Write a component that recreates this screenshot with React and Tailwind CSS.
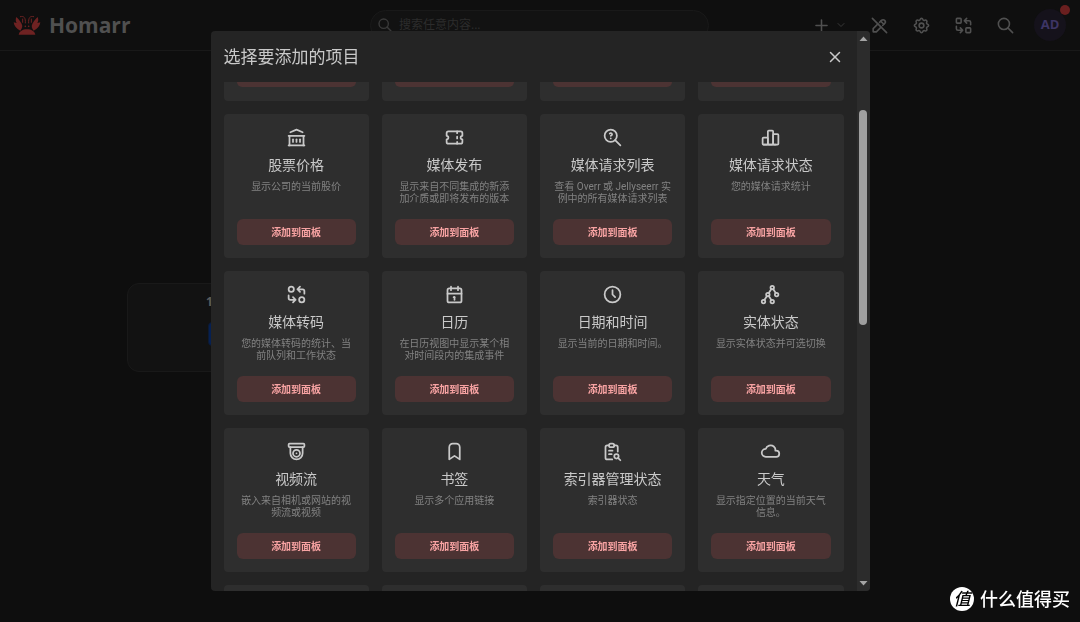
import React from 'react';
import {
  TbBinaryTree,
  TbBookmark,
  TbBuildingBank,
  TbCalendar,
  TbChartBar,
  TbChevronDown,
  TbClock,
  TbCloud,
  TbDeviceCctv,
  TbPencilOff,
  TbPlus,
  TbReplace,
  TbReportSearch,
  TbSearch,
  TbSettings,
  TbTicket,
  TbTransform,
  TbX,
  TbZoomQuestion,
} from 'react-icons/tb';

const items = [
  { icon: TbBuildingBank, title: '股票价格', description: '显示公司的当前股价' },
  { icon: TbTicket, title: '媒体发布', description: '显示来自不同集成的新添加介质或即将发布的版本' },
  { icon: TbZoomQuestion, title: '媒体请求列表', description: '查看 Overr 或 Jellyseerr 实例中的所有媒体请求列表' },
  { icon: TbChartBar, title: '媒体请求状态', description: '您的媒体请求统计' },
  { icon: TbTransform, title: '媒体转码', description: '您的媒体转码的统计、当前队列和工作状态' },
  { icon: TbCalendar, title: '日历', description: '在日历视图中显示某个相对时间段内的集成事件' },
  { icon: TbClock, title: '日期和时间', description: '显示当前的日期和时间。' },
  { icon: TbBinaryTree, title: '实体状态', description: '显示实体状态并可选切换' },
  { icon: TbDeviceCctv, title: '视频流', description: '嵌入来自相机或网站的视频流或视频' },
  { icon: TbBookmark, title: '书签', description: '显示多个应用链接' },
  { icon: TbReportSearch, title: '索引器管理状态', description: '索引器状态' },
  { icon: TbCloud, title: '天气', description: '显示指定位置的当前天气信息。' },
];

const columns = [0, 1, 2, 3];

const Logo = () => (
  <svg viewBox="0 0 84 60" className="h-5 w-7" aria-hidden="true">
    <g fill="#6e2222">
      <path d="M17 59c2-10 12-16 25-16s23 6 25 16z" />
      <path d="M10 6C7 13 8 19 11 24L2 22c1 10 8 19 20 25 6-7 8-14 3-22C21 17 15 11 10 6z" />
      <path d="M74 6c3 7 2 13-1 18l9-2c-1 10-8 19-20 25-6-7-8-14-3-22 4-8 10-14 15-19z" />
      <circle cx="37" cy="34" r="2.5" />
      <circle cx="47" cy="34" r="2.5" />
    </g>
    <g fill="none" stroke="#6e2222" strokeWidth="3" strokeLinecap="round">
      <path d="M37 24C38 9 34 2 22 5" />
      <path d="M47 24C46 9 50 2 62 5" />
      <path d="M29 12v10M55 12v10" />
    </g>
  </svg>
);

const Header = () => (
  <header className="flex h-[51px] items-center border-b border-[#191919] bg-[#0f0f0f] pr-3.5 pl-[13px]">
    <a href="#" className="flex flex-1 items-center gap-2">
      <Logo />
      <span className="text-[21px] leading-7 font-bold text-[#505050]">Homarr</span>
    </a>
    <label className="flex h-[31px] w-[339px] items-center gap-1.5 rounded-full border border-[#191919] bg-[#121212] px-1.5 text-[#3a3a3a]">
      <TbSearch className="size-4" />
      <input
        type="text"
        placeholder="搜索任意内容..."
        aria-label="搜索任意内容..."
        className="min-w-0 flex-1 bg-transparent text-xs outline-none placeholder:text-[#2c2c2c]"
      />
    </label>
    <div className="flex flex-1 items-center justify-end gap-[23px] text-[#505050]">
      <button type="button" aria-label="添加" className="flex items-center gap-1">
        <TbPlus className="size-[19px]" />
        <TbChevronDown className="size-3 text-[#383838]" />
      </button>
      <button type="button" aria-label="编辑"><TbPencilOff className="size-[19px]" /></button>
      <button type="button" aria-label="设置"><TbSettings className="size-[19px]" /></button>
      <button type="button" aria-label="切换"><TbReplace className="size-[19px]" /></button>
      <button type="button" aria-label="搜索"><TbSearch className="size-[19px]" /></button>
      <button
        type="button"
        className="relative -ml-1 flex size-8 items-center justify-center rounded-full bg-[#15121b] text-[13px] font-bold text-[#3d3565]"
      >
        AD
        <span className="absolute -top-1 -right-1 size-2.5 rounded-full bg-[#6a1f1f]" />
      </button>
    </div>
  </header>
);

const ItemCard = ({ icon: Icon, title, description }) => (
  <div className="flex flex-col items-center rounded bg-[#2e2e2e] p-[13px] text-center">
    <Icon className="size-[21px] text-[#c9c9c9]" />
    <h3 className="mt-[7px] text-sm leading-5 text-[#c9c9c9]">{title}</h3>
    <p className="mt-1.5 min-h-[25px] font-[Roboto,'Noto_Sans_CJK_SC',sans-serif] text-[10px] leading-3 text-[#828282]">
      {description}
    </p>
    <button
      type="button"
      className="mt-[13px] h-[26px] w-full rounded-md bg-[#4c3333] text-[10px] font-bold text-[#f8a3a3]"
    >
      添加到面板
    </button>
  </div>
);

const ScrollTrack = () => (
  <div className="flex w-[13px] shrink-0 flex-col items-center bg-[#2c2c2c]">
    <svg viewBox="0 0 13 15" className="h-[15px] w-[13px]" aria-hidden="true">
      <path d="M2.5 10L6.5 5.5L10.5 10z" fill="#a5a5a5" />
    </svg>
    <div className="flex-[64]" />
    <div className="w-2 flex-[214] rounded-full bg-[#9f9f9f]" />
    <div className="flex-[251]" />
    <svg viewBox="0 0 13 15" className="h-[15px] w-[13px]" aria-hidden="true">
      <path d="M2.5 5L6.5 9.5L10.5 5z" fill="#a5a5a5" />
    </svg>
  </div>
);

const SelectItemModal = () => (
  <div className="fixed inset-0 flex items-center justify-center">
    <section
      role="dialog"
      aria-labelledby="modal-title"
      className="flex h-[90vh] w-full max-w-[659px] overflow-hidden rounded bg-[#242424]"
    >
      <div className="flex min-w-0 flex-1 flex-col px-[13px]">
        <div className="flex h-[51px] shrink-0 items-center justify-between">
          <h2 id="modal-title" className="text-[17px] leading-6 text-[#c9c9c9]">选择要添加的项目</h2>
          <button type="button" aria-label="关闭" className="text-[#c9c9c9]">
            <TbX className="size-[18px]" />
          </button>
        </div>
        <div className="grid min-h-0 flex-1 grid-cols-4 content-start gap-[13px] overflow-hidden">
          {/* tail of the row scrolled out above */}
          {columns.map((column) => (
            <div key={column} className="h-[19px] rounded-b bg-[#2e2e2e] px-[13px]">
              <div className="h-[5px] rounded-b-md bg-[#4c3333]" />
            </div>
          ))}
          {items.map((item) => (
            <ItemCard key={item.title} {...item} />
          ))}
          {columns.map((column) => (
            <div key={column} className="h-36 rounded bg-[#2e2e2e]" />
          ))}
        </div>
      </div>
      <ScrollTrack />
    </section>
  </div>
);

const Watermark = () => (
  <div className="fixed right-2.5 bottom-[11px] flex items-center gap-1.5 text-white">
    <span className="flex size-6 items-center justify-center rounded-full bg-white text-[17px] leading-6 font-medium text-black italic">
      值
    </span>
    <span className="text-lg leading-6 font-medium">什么值得买</span>
  </div>
);

const App = () => (
  <div className="min-h-screen bg-[#0e0e0e] font-['Open_Sans','Noto_Sans_CJK_SC',sans-serif]">
    <Header />
    <main className="px-[127px] pt-[232px]">
      <div className="flex h-[89px] w-44 flex-col items-start gap-3 rounded-xl border border-[#191919] bg-[#121212] pt-2.5 pl-[78px]">
        <span className="text-xs leading-4 font-bold text-[#5c5c5c]">1</span>
        <span className="ml-0.5 h-6 w-7 rounded-sm border border-[#0c1a33] bg-[#062052]" />
      </div>
    </main>
    <SelectItemModal />
    <Watermark />
  </div>
);

export default App;
